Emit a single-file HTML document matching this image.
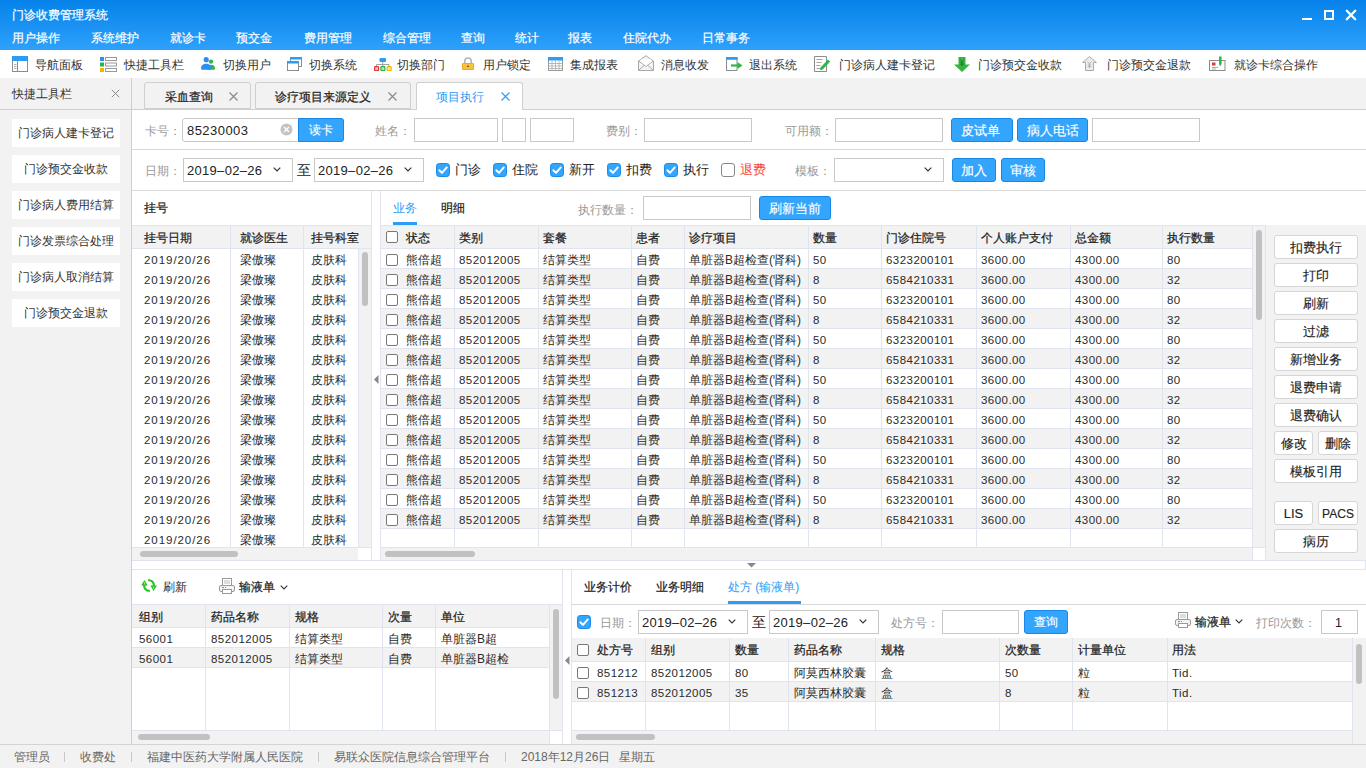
<!DOCTYPE html><html><head><meta charset="utf-8"><title>门诊收费管理系统</title><style>
*{box-sizing:border-box;margin:0;padding:0}
html,body{width:1366px;height:768px;overflow:hidden;background:#f2f2f2;font-family:"Liberation Sans",sans-serif;font-size:12px;color:#333}
.abs{position:absolute}
.t{position:absolute;white-space:nowrap;line-height:14px}
#hdr{position:absolute;left:0;top:0;width:1366px;height:50px;background:linear-gradient(#0582e9,#2ea1fc)}
#hdr .t{color:#fff}
#tb{position:absolute;left:0;top:50px;width:1366px;height:28px;background:#fff}
.ico{position:absolute}
.btnb{position:absolute;background:#34a5fd;border:1px solid #1688e8;color:#fff;border-radius:3px;text-align:center;line-height:22px;height:23px;-webkit-text-stroke:0.15px #fff}
.inp{position:absolute;background:#fff;border:1px solid #c9c9c9;height:24px}
.lbl{position:absolute;color:#999;white-space:nowrap;line-height:14px}
.cb{position:absolute;width:14px;height:14px;border-radius:3px;background:#2d9cf5}
.cbo{position:absolute;width:12px;height:12px;border-radius:2px;border:1px solid #777;background:#fff}
.gl{position:absolute;background:#dfe4ef}
.b{-webkit-text-stroke:0.22px #222}
.num{letter-spacing:0.2px}
.rbtn{position:absolute;background:#fff;border:1px solid #d6d6d6;border-radius:3px;text-align:center;line-height:23px;height:24px;color:#222;-webkit-text-stroke:0.15px #222}
</style></head><body>
<div id="hdr">
<div class="t" style="left:12px;top:8px;-webkit-text-stroke:0.2px #fff">门诊收费管理系统</div>
<div class="t" style="left:12px;top:31px;-webkit-text-stroke:0.2px #fff">用户操作</div>
<div class="t" style="left:91px;top:31px;-webkit-text-stroke:0.2px #fff">系统维护</div>
<div class="t" style="left:170px;top:31px;-webkit-text-stroke:0.2px #fff">就诊卡</div>
<div class="t" style="left:236px;top:31px;-webkit-text-stroke:0.2px #fff">预交金</div>
<div class="t" style="left:304px;top:31px;-webkit-text-stroke:0.2px #fff">费用管理</div>
<div class="t" style="left:383px;top:31px;-webkit-text-stroke:0.2px #fff">综合管理</div>
<div class="t" style="left:461px;top:31px;-webkit-text-stroke:0.2px #fff">查询</div>
<div class="t" style="left:515px;top:31px;-webkit-text-stroke:0.2px #fff">统计</div>
<div class="t" style="left:568px;top:31px;-webkit-text-stroke:0.2px #fff">报表</div>
<div class="t" style="left:623px;top:31px;-webkit-text-stroke:0.2px #fff">住院代办</div>
<div class="t" style="left:702px;top:31px;-webkit-text-stroke:0.2px #fff">日常事务</div>
<div class="abs" style="left:1302px;top:18px;width:10px;height:2px;background:#fff"></div>
<div class="abs" style="left:1324px;top:10px;width:10px;height:10px;border:2px solid #fff"></div>
<svg class="abs" style="left:1345px;top:9px" width="12" height="12" viewBox="0 0 12 12"><path d="M1.8 1.8L10.2 10.2M10.2 1.8L1.8 10.2" stroke="#fff" stroke-width="2.3" stroke-linecap="round"/></svg>
</div>
<div id="tb">
<div class="ico" style="left:12px;top:6px;line-height:0"><svg width="16" height="16" viewBox="0 0 16 16"><rect x="0.5" y="0.5" width="15" height="15" fill="#fff" stroke="#8c8c8c"/><rect x="0" y="0" width="16" height="5" fill="#2d9cf5"/><line x1="5.5" y1="5" x2="5.5" y2="16" stroke="#8c8c8c"/><path d="M2 8.5h2.5M2 10.5h2.5M2 12.5h2.5" stroke="#999" stroke-width="0.8"/></svg></div>
<div class="t" style="left:35px;top:8px;color:#333">导航面板</div>
<div class="ico" style="left:100px;top:7px;line-height:0"><svg width="17" height="15" viewBox="0 0 17 15"><rect x="0" y="0" width="4" height="4" fill="#2d8ef0"/><rect x="0" y="5.5" width="4" height="4" fill="#23b34a"/><rect x="0" y="11" width="4" height="4" fill="#f4b400"/><rect x="5.5" y="0.5" width="11" height="3" fill="none" stroke="#999"/><rect x="5.5" y="6" width="11" height="3" fill="none" stroke="#999"/><rect x="5.5" y="11.5" width="11" height="3" fill="none" stroke="#999"/></svg></div>
<div class="t" style="left:124px;top:8px;color:#333">快捷工具栏</div>
<div class="ico" style="left:201px;top:7px;line-height:0"><svg width="14" height="13" viewBox="0 0 14 13"><circle cx="10" cy="4.6" r="2.2" fill="#2fb84a"/><path d="M6.5 12.5C6.5 9.5 8 7.8 10.3 7.8S14 9.5 14 11.3C14 12.3 13.5 12.8 12.5 12.8H7z" fill="#2fb84a"/><circle cx="5.2" cy="2.7" r="2.6" fill="#2d8ef0"/><path d="M0 11.2C0 8.5 2.2 6.8 5.2 6.8S10.4 8.5 10.4 11.2C10.4 12.3 9.8 12.8 8.8 12.8H1.6C0.6 12.8 0 12.3 0 11.2z" fill="#2d8ef0"/></svg></div>
<div class="t" style="left:223px;top:8px;color:#333">切换用户</div>
<div class="ico" style="left:287px;top:7px;line-height:0"><svg width="15" height="14" viewBox="0 0 15 14"><rect x="3.5" y="0.5" width="11" height="9" fill="#fff" stroke="#8c8c8c"/><rect x="3" y="0" width="12" height="2.5" fill="#2d9cf5"/><rect x="0.5" y="4.5" width="11" height="9" fill="#fff" stroke="#8c8c8c"/><rect x="0" y="4" width="12" height="2.5" fill="#2d9cf5"/></svg></div>
<div class="t" style="left:309px;top:8px;color:#333">切换系统</div>
<div class="ico" style="left:374px;top:8px;line-height:0"><svg width="18" height="13" viewBox="0 0 18 13"><rect x="5.5" y="0" width="6.5" height="4" rx="1" fill="#2d9cf5"/><path d="M8.75 4v2.5M2.5 8.5V6.5h12.5v2M8.75 6.5v2" stroke="#999" fill="none" stroke-width="0.9"/><rect x="0.6" y="8.6" width="4" height="4" rx="0.8" fill="#f8c0c0" stroke="#e53935" stroke-width="1.2"/><rect x="6.9" y="8.6" width="4" height="4" rx="0.8" fill="#b8e8c0" stroke="#23b34a" stroke-width="1.2"/><rect x="13.2" y="8.6" width="4" height="4" rx="0.8" fill="#fde7a0" stroke="#f4b400" stroke-width="1.2"/></svg></div>
<div class="t" style="left:397px;top:8px;color:#333">切换部门</div>
<div class="ico" style="left:462px;top:7px;line-height:0"><svg width="12" height="13" viewBox="0 0 12 13"><path d="M2.8 6.5V4.2a3.2 3.2 0 0 1 6.4 0V6.5" fill="none" stroke="#b5b5b5" stroke-width="1.6"/><rect x="0" y="6" width="12" height="7" rx="1" fill="#f9c23c"/><rect x="0.5" y="6.5" width="11" height="6" rx="0.8" fill="none" stroke="#e0a820" stroke-width="0.8"/><rect x="5.2" y="8.6" width="1.6" height="1.4" fill="#5a4a10"/></svg></div>
<div class="t" style="left:483px;top:8px;color:#333">用户锁定</div>
<div class="ico" style="left:548px;top:7px;line-height:0"><svg width="15" height="14" viewBox="0 0 15 14"><rect x="0.5" y="0.5" width="14" height="13" fill="#fff" stroke="#999"/><rect x="0" y="0" width="15" height="3.5" fill="#2d9cf5"/><path d="M0.5 6.5h14M0.5 9h14M0.5 11.5h14M4 3.5v10M7.5 3.5v10M11 3.5v10" stroke="#aaa" stroke-width="0.8"/></svg></div>
<div class="t" style="left:570px;top:8px;color:#333">集成报表</div>
<div class="ico" style="left:638px;top:5px;line-height:0"><svg width="16" height="16" viewBox="0 0 16 16"><path d="M0.5 6L8 0.7L15.5 6v9.5H0.5z" fill="#f4f4f4" stroke="#aaa"/><path d="M2.5 4.5h11v5l-5.5 3-5.5-3z" fill="#fff" stroke="none"/><path d="M0.5 6l7.5 5.5L15.5 6M0.5 15.5l5.5-5M15.5 15.5l-5.5-5" fill="none" stroke="#aaa"/></svg></div>
<div class="t" style="left:661px;top:8px;color:#333">消息收发</div>
<div class="ico" style="left:726px;top:7px;line-height:0"><svg width="17" height="14" viewBox="0 0 17 14"><rect x="0.5" y="0.5" width="10.5" height="13" fill="#fff" stroke="#8c8c8c"/><rect x="0" y="0" width="11.5" height="2.8" fill="#2d9cf5"/><path d="M5 8.5h7" stroke="#2fb84a" stroke-width="2.2"/><path d="M11.5 5l5 3.5-5 3.5z" fill="#2fb84a"/></svg></div>
<div class="t" style="left:749px;top:8px;color:#333">退出系统</div>
<div class="ico" style="left:814px;top:6px;line-height:0"><svg width="17" height="16" viewBox="0 0 17 16"><path d="M0.5 0.5h12v15h-12z" fill="#fff" stroke="#8c8c8c"/><path d="M2.5 3.5h6M2.5 6.5h5M2.5 9.5h4M2.5 12.5h5" stroke="#999" stroke-width="0.9"/><path d="M6.5 11.5L14 3.5l2.2 2L8.7 13.5 6 14.3z" fill="#2fb84a"/></svg></div>
<div class="t" style="left:839px;top:8px;color:#333">门诊病人建卡登记</div>
<div class="ico" style="left:954px;top:7px;line-height:0"><svg width="16" height="15" viewBox="0 0 16 15"><path d="M4.5 0h7v7.5H16L8 15 0 7.5h4.5z" fill="#33b53f"/><path d="M6 2.5l2 2.5 2-2.5M8 5v4M6.3 6h3.4M6.3 7.6h3.4" stroke="#1a7a22" stroke-width="0.8" fill="none"/></svg></div>
<div class="t" style="left:978px;top:8px;color:#333">门诊预交金收款</div>
<div class="ico" style="left:1082px;top:6px;line-height:0"><svg width="15" height="15" viewBox="0 0 15 15"><path d="M7.5 0.6L14.4 6.5h-2.9v8h-8v-8H0.6z" fill="#ececec" stroke="#aaa"/><path d="M5.5 5.5l2 2.5 2-2.5M7.5 8v4M5.8 9h3.4M5.8 10.6h3.4" stroke="#aaa" stroke-width="0.8" fill="none"/></svg></div>
<div class="t" style="left:1107px;top:8px;color:#333">门诊预交金退款</div>
<div class="ico" style="left:1209px;top:6px;line-height:0"><svg width="17" height="15" viewBox="0 0 17 15"><rect x="0.5" y="4.5" width="15.5" height="10" fill="#fff" stroke="#8c8c8c"/><rect x="3" y="6.5" width="3.5" height="3" fill="#e53935"/><path d="M3 11.5h6M3 13h4" stroke="#999" stroke-width="0.8"/><path d="M10 0.5h2.6v7.5l-1.3 2.2-1.3-2.2z" fill="#2fb84a"/></svg></div>
<div class="t" style="left:1234px;top:8px;color:#333">就诊卡综合操作</div>
</div>
<div class="abs" style="left:0;top:78px;width:132px;height:667px;background:#f2f2f2;border-right:1px solid #cfcfcf"></div>
<div class="abs" style="left:0;top:109px;width:131px;height:1px;background:#cfcfcf"></div>
<div class="t" style="left:12px;top:87px;color:#333">快捷工具栏</div>
<svg class="abs" style="left:111px;top:89px" width="9" height="9" viewBox="0 0 9 9"><path d="M0.8 0.8L8.2 8.2M8.2 0.8L0.8 8.2" stroke="#888" stroke-width="1"/></svg>
<div class="abs" style="left:12px;top:119px;width:108px;height:28px;background:#fff;text-align:center;line-height:28px">门诊病人建卡登记</div>
<div class="abs" style="left:12px;top:155px;width:108px;height:28px;background:#fff;text-align:center;line-height:28px">门诊预交金收款</div>
<div class="abs" style="left:12px;top:191px;width:108px;height:28px;background:#fff;text-align:center;line-height:28px">门诊病人费用结算</div>
<div class="abs" style="left:12px;top:227px;width:108px;height:28px;background:#fff;text-align:center;line-height:28px">门诊发票综合处理</div>
<div class="abs" style="left:12px;top:263px;width:108px;height:28px;background:#fff;text-align:center;line-height:28px">门诊病人取消结算</div>
<div class="abs" style="left:12px;top:299px;width:108px;height:28px;background:#fff;text-align:center;line-height:28px">门诊预交金退款</div>
<div class="abs" style="left:132px;top:109px;width:1234px;height:1px;background:#cfcfcf"></div>
<div class="abs" style="left:144px;top:82px;width:107px;height:27px;background:#f2f2f2;border:1px solid #cfcfcf;;border-radius:3px 3px 0 0"></div>
<div class="abs" style="left:255px;top:82px;width:156px;height:27px;background:#f2f2f2;border:1px solid #cfcfcf;;border-radius:3px 3px 0 0"></div>
<div class="abs" style="left:416px;top:82px;width:107px;border-bottom:none;height:28px;background:#fff;border:1px solid #cfcfcf;border-bottom:none;border-radius:3px 3px 0 0"></div>
<div class="t" style="left:165px;top:90px;color:#222;-webkit-text-stroke:0.22px #222">采血查询</div>
<div class="t" style="left:275px;top:90px;color:#222;-webkit-text-stroke:0.22px #222">诊疗项目来源定义</div>
<div class="t" style="left:436px;top:90px;color:#2d9cf5">项目执行</div>
<svg class="abs" style="left:229px;top:92px" width="9" height="9" viewBox="0 0 9 9"><path d="M0.5 0.5L8.5 8.5M8.5 0.5L0.5 8.5" stroke="#888" stroke-width="1.1"/></svg>
<svg class="abs" style="left:388px;top:92px" width="9" height="9" viewBox="0 0 9 9"><path d="M0.5 0.5L8.5 8.5M8.5 0.5L0.5 8.5" stroke="#888" stroke-width="1.1"/></svg>
<svg class="abs" style="left:501px;top:92px" width="9" height="9" viewBox="0 0 9 9"><path d="M0.5 0.5L8.5 8.5M8.5 0.5L0.5 8.5" stroke="#2d9cf5" stroke-width="1.1"/></svg>
<div class="abs" style="left:132px;top:110px;width:1234px;height:80px;background:#fff"></div>
<div class="abs" style="left:132px;top:149px;width:1234px;height:1px;background:#d9d9d9"></div>
<div class="abs" style="left:132px;top:190px;width:1234px;height:1px;background:#d9d9d9"></div>
<div class="lbl" style="left:145px;top:124px">卡号：</div>
<div class="inp" style="left:182px;top:118px;width:162px;height:24px;border-radius:3px"></div>
<div class="t" style="left:187px;top:124px;font-size:13px;line-height:14px;letter-spacing:0.45px;color:#222">85230003</div>
<svg class="abs" style="left:280px;top:123px" width="13" height="13" viewBox="0 0 13 13"><circle cx="6.5" cy="6.5" r="6" fill="#c3c3c3"/><path d="M4 4L9 9M9 4L4 9" stroke="#fff" stroke-width="1.3"/></svg>
<div class="btnb" style="left:298px;top:118px;width:46px;height:24px;line-height:23px;border-radius:0 3px 3px 0">读卡</div>
<div class="lbl" style="left:375px;top:124px">姓名：</div>
<div class="inp" style="left:414px;top:118px;width:84px;height:24px;"></div>
<div class="inp" style="left:502px;top:118px;width:24px;height:24px;"></div>
<div class="inp" style="left:530px;top:118px;width:44px;height:24px;"></div>
<div class="lbl" style="left:606px;top:124px">费别：</div>
<div class="inp" style="left:644px;top:118px;width:108px;height:24px;"></div>
<div class="lbl" style="left:785px;top:124px">可用额：</div>
<div class="inp" style="left:835px;top:118px;width:108px;height:24px;"></div>
<div class="btnb" style="left:951px;top:118px;width:62px;height:24px;line-height:23px;font-size:13px"><span style="margin-left:-3px">皮试单</span></div>
<div class="btnb" style="left:1017px;top:118px;width:71px;height:24px;line-height:23px;font-size:13px">病人电话</div>
<div class="inp" style="left:1092px;top:118px;width:108px;height:24px;"></div>
<div class="lbl" style="left:145px;top:164px">日期：</div>
<div class="inp" style="left:183px;top:158px;width:110px;height:24px"></div>
<div class="t" style="left:187px;top:164px;font-size:13px;letter-spacing:0.3px;color:#222">2019–02–26</div>
<svg class="abs" style="left:273px;top:167px" width="8" height="5" viewBox="0 0 8 5"><path d="M0.7 0.7L4 4L7.3 0.7" fill="none" stroke="#333" stroke-width="1.2"/></svg>
<div class="t" style="left:297px;top:163px;font-size:14px;color:#222">至</div>
<div class="inp" style="left:314px;top:158px;width:110px;height:24px"></div>
<div class="t" style="left:318px;top:164px;font-size:13px;letter-spacing:0.3px;color:#222">2019–02–26</div>
<svg class="abs" style="left:404px;top:167px" width="8" height="5" viewBox="0 0 8 5"><path d="M0.7 0.7L4 4L7.3 0.7" fill="none" stroke="#333" stroke-width="1.2"/></svg>
<svg class="abs" style="left:436px;top:163px" width="14" height="14" viewBox="0 0 14 14"><rect x="0.5" y="0.5" width="13" height="13" rx="2.8" fill="#34a5fd" stroke="#1a8be9"/><path d="M3.3 7.3L6 9.9L10.8 4.4" fill="none" stroke="#fff" stroke-width="1.9" stroke-linecap="round" stroke-linejoin="round"/></svg>
<div class="t" style="left:455px;top:163px;font-size:13px;color:#222">门诊</div>
<svg class="abs" style="left:493px;top:163px" width="14" height="14" viewBox="0 0 14 14"><rect x="0.5" y="0.5" width="13" height="13" rx="2.8" fill="#34a5fd" stroke="#1a8be9"/><path d="M3.3 7.3L6 9.9L10.8 4.4" fill="none" stroke="#fff" stroke-width="1.9" stroke-linecap="round" stroke-linejoin="round"/></svg>
<div class="t" style="left:512px;top:163px;font-size:13px;color:#222">住院</div>
<svg class="abs" style="left:550px;top:163px" width="14" height="14" viewBox="0 0 14 14"><rect x="0.5" y="0.5" width="13" height="13" rx="2.8" fill="#34a5fd" stroke="#1a8be9"/><path d="M3.3 7.3L6 9.9L10.8 4.4" fill="none" stroke="#fff" stroke-width="1.9" stroke-linecap="round" stroke-linejoin="round"/></svg>
<div class="t" style="left:569px;top:163px;font-size:13px;color:#222">新开</div>
<svg class="abs" style="left:607px;top:163px" width="14" height="14" viewBox="0 0 14 14"><rect x="0.5" y="0.5" width="13" height="13" rx="2.8" fill="#34a5fd" stroke="#1a8be9"/><path d="M3.3 7.3L6 9.9L10.8 4.4" fill="none" stroke="#fff" stroke-width="1.9" stroke-linecap="round" stroke-linejoin="round"/></svg>
<div class="t" style="left:626px;top:163px;font-size:13px;color:#222">扣费</div>
<svg class="abs" style="left:664px;top:163px" width="14" height="14" viewBox="0 0 14 14"><rect x="0.5" y="0.5" width="13" height="13" rx="2.8" fill="#34a5fd" stroke="#1a8be9"/><path d="M3.3 7.3L6 9.9L10.8 4.4" fill="none" stroke="#fff" stroke-width="1.9" stroke-linecap="round" stroke-linejoin="round"/></svg>
<div class="t" style="left:683px;top:163px;font-size:13px;color:#222">执行</div>
<div class="abs" style="left:721px;top:163px;width:14px;height:14px;border:1px solid #888;border-radius:3px;background:#fff"></div>
<div class="t" style="left:740px;top:163px;font-size:13px;color:#f5423b">退费</div>
<div class="lbl" style="left:795px;top:164px">模板：</div>
<div class="inp" style="left:834px;top:158px;width:110px;height:24px"></div>
<svg class="abs" style="left:924px;top:167px" width="8" height="5" viewBox="0 0 8 5"><path d="M0.7 0.7L4 4L7.3 0.7" fill="none" stroke="#333" stroke-width="1.2"/></svg>
<div class="btnb" style="left:952px;top:158px;width:44px;height:24px;line-height:23px;font-size:13px">加入</div>
<div class="btnb" style="left:1001px;top:158px;width:44px;height:24px;line-height:23px;font-size:13px">审核</div>
<div class="abs" style="left:132px;top:191px;width:240px;height:369px;background:#fff"></div>
<div class="t" style="left:144px;top:201px;color:#222;-webkit-text-stroke:0.22px #222">挂号</div>
<div class="abs" style="left:132px;top:226px;width:239px;height:22px;background:#f2f2f2"></div>
<div class="abs" style="left:132px;top:225px;width:239px;height:1px;background:#dfe4ef"></div>
<div class="abs" style="left:132px;top:248px;width:239px;height:1px;background:#dfe4ef"></div>
<div class="abs" style="left:230px;top:225px;width:1px;height:323px;background:#dfe4ef"></div>
<div class="abs" style="left:303px;top:225px;width:1px;height:323px;background:#dfe4ef"></div>
<div class="t" style="left:144px;top:231px;color:#222;-webkit-text-stroke:0.22px #222">挂号日期</div>
<div class="t" style="left:240px;top:231px;color:#222;-webkit-text-stroke:0.22px #222">就诊医生</div>
<div class="t" style="left:311px;top:231px;color:#222;-webkit-text-stroke:0.22px #222">挂号科室</div>
<div class="t" style="left:144px;top:253px;font-size:11.5px;letter-spacing:0.95px;color:#2a2a2a">2019/20/26</div>
<div class="t" style="left:240px;top:253px;color:#2a2a2a">梁傲璨</div>
<div class="t" style="left:311px;top:253px;color:#2a2a2a">皮肤科</div>
<div class="t" style="left:144px;top:273px;font-size:11.5px;letter-spacing:0.95px;color:#2a2a2a">2019/20/26</div>
<div class="t" style="left:240px;top:273px;color:#2a2a2a">梁傲璨</div>
<div class="t" style="left:311px;top:273px;color:#2a2a2a">皮肤科</div>
<div class="t" style="left:144px;top:293px;font-size:11.5px;letter-spacing:0.95px;color:#2a2a2a">2019/20/26</div>
<div class="t" style="left:240px;top:293px;color:#2a2a2a">梁傲璨</div>
<div class="t" style="left:311px;top:293px;color:#2a2a2a">皮肤科</div>
<div class="t" style="left:144px;top:313px;font-size:11.5px;letter-spacing:0.95px;color:#2a2a2a">2019/20/26</div>
<div class="t" style="left:240px;top:313px;color:#2a2a2a">梁傲璨</div>
<div class="t" style="left:311px;top:313px;color:#2a2a2a">皮肤科</div>
<div class="t" style="left:144px;top:333px;font-size:11.5px;letter-spacing:0.95px;color:#2a2a2a">2019/20/26</div>
<div class="t" style="left:240px;top:333px;color:#2a2a2a">梁傲璨</div>
<div class="t" style="left:311px;top:333px;color:#2a2a2a">皮肤科</div>
<div class="t" style="left:144px;top:353px;font-size:11.5px;letter-spacing:0.95px;color:#2a2a2a">2019/20/26</div>
<div class="t" style="left:240px;top:353px;color:#2a2a2a">梁傲璨</div>
<div class="t" style="left:311px;top:353px;color:#2a2a2a">皮肤科</div>
<div class="t" style="left:144px;top:373px;font-size:11.5px;letter-spacing:0.95px;color:#2a2a2a">2019/20/26</div>
<div class="t" style="left:240px;top:373px;color:#2a2a2a">梁傲璨</div>
<div class="t" style="left:311px;top:373px;color:#2a2a2a">皮肤科</div>
<div class="t" style="left:144px;top:393px;font-size:11.5px;letter-spacing:0.95px;color:#2a2a2a">2019/20/26</div>
<div class="t" style="left:240px;top:393px;color:#2a2a2a">梁傲璨</div>
<div class="t" style="left:311px;top:393px;color:#2a2a2a">皮肤科</div>
<div class="t" style="left:144px;top:413px;font-size:11.5px;letter-spacing:0.95px;color:#2a2a2a">2019/20/26</div>
<div class="t" style="left:240px;top:413px;color:#2a2a2a">梁傲璨</div>
<div class="t" style="left:311px;top:413px;color:#2a2a2a">皮肤科</div>
<div class="t" style="left:144px;top:433px;font-size:11.5px;letter-spacing:0.95px;color:#2a2a2a">2019/20/26</div>
<div class="t" style="left:240px;top:433px;color:#2a2a2a">梁傲璨</div>
<div class="t" style="left:311px;top:433px;color:#2a2a2a">皮肤科</div>
<div class="t" style="left:144px;top:453px;font-size:11.5px;letter-spacing:0.95px;color:#2a2a2a">2019/20/26</div>
<div class="t" style="left:240px;top:453px;color:#2a2a2a">梁傲璨</div>
<div class="t" style="left:311px;top:453px;color:#2a2a2a">皮肤科</div>
<div class="t" style="left:144px;top:473px;font-size:11.5px;letter-spacing:0.95px;color:#2a2a2a">2019/20/26</div>
<div class="t" style="left:240px;top:473px;color:#2a2a2a">梁傲璨</div>
<div class="t" style="left:311px;top:473px;color:#2a2a2a">皮肤科</div>
<div class="t" style="left:144px;top:493px;font-size:11.5px;letter-spacing:0.95px;color:#2a2a2a">2019/20/26</div>
<div class="t" style="left:240px;top:493px;color:#2a2a2a">梁傲璨</div>
<div class="t" style="left:311px;top:493px;color:#2a2a2a">皮肤科</div>
<div class="t" style="left:144px;top:513px;font-size:11.5px;letter-spacing:0.95px;color:#2a2a2a">2019/20/26</div>
<div class="t" style="left:240px;top:513px;color:#2a2a2a">梁傲璨</div>
<div class="t" style="left:311px;top:513px;color:#2a2a2a">皮肤科</div>
<div class="t" style="left:144px;top:533px;font-size:11.5px;letter-spacing:0.95px;color:#2a2a2a">2019/20/26</div>
<div class="t" style="left:240px;top:533px;color:#2a2a2a">梁傲璨</div>
<div class="t" style="left:311px;top:533px;color:#2a2a2a">皮肤科</div>
<div class="abs" style="left:358px;top:249px;width:13px;height:299px;background:#f2f2f2"></div>
<div class="abs" style="left:358px;top:248px;width:1px;height:300px;background:#dfe4ef"></div>
<div class="abs" style="left:362px;top:252px;width:6px;height:54px;border-radius:3px;background:#c1c1c1"></div>
<div class="abs" style="left:132px;top:548px;width:226px;height:12px;background:#f2f2f2"></div>
<div class="abs" style="left:132px;top:547px;width:239px;height:1px;background:#dfe4ef"></div>
<div class="abs" style="left:140px;top:551px;width:98px;height:6px;border-radius:3px;background:#c1c1c1"></div>
<div class="abs" style="left:371px;top:191px;width:1px;height:369px;background:#dfe4ef"></div>
<div class="abs" style="left:372px;top:191px;width:8px;height:369px;background:#fff"></div>
<svg class="abs" style="left:374px;top:375px" width="5" height="9" viewBox="0 0 5 9"><path d="M4.5 0L0 4.5L4.5 9z" fill="#888"/></svg>
<div class="abs" style="left:380px;top:191px;width:886px;height:369px;background:#fff"></div>
<div class="abs" style="left:380px;top:191px;width:1px;height:369px;background:#dfe4ef"></div>
<div class="t" style="left:393px;top:201px;color:#2d9cf5">业务</div>
<div class="t" style="left:441px;top:201px;color:#222;-webkit-text-stroke:0.22px #222">明细</div>
<div class="abs" style="left:393px;top:222px;width:24px;height:3px;background:#2d9cf5"></div>
<div class="lbl" style="left:578px;top:203px">执行数量：</div>
<div class="inp" style="left:643px;top:196px;width:108px;height:24px;"></div>
<div class="btnb" style="left:759px;top:196px;width:72px;height:24px;line-height:23px;font-size:13px">刷新当前</div>
<div class="abs" style="left:381px;top:226px;width:871px;height:22px;background:#f2f2f2"></div>
<div class="abs" style="left:381px;top:225px;width:885px;height:1px;background:#dfe4ef"></div>
<div class="abs" style="left:381px;top:248px;width:871px;height:1px;background:#dfe4ef"></div>
<div class="abs" style="left:381px;top:269px;width:871px;height:19px;background:#f2f2f2"></div>
<div class="abs" style="left:381px;top:268px;width:871px;height:1px;background:#dfe4ef"></div>
<div class="abs" style="left:381px;top:288px;width:871px;height:1px;background:#dfe4ef"></div>
<div class="abs" style="left:381px;top:309px;width:871px;height:19px;background:#f2f2f2"></div>
<div class="abs" style="left:381px;top:308px;width:871px;height:1px;background:#dfe4ef"></div>
<div class="abs" style="left:381px;top:328px;width:871px;height:1px;background:#dfe4ef"></div>
<div class="abs" style="left:381px;top:349px;width:871px;height:19px;background:#f2f2f2"></div>
<div class="abs" style="left:381px;top:348px;width:871px;height:1px;background:#dfe4ef"></div>
<div class="abs" style="left:381px;top:368px;width:871px;height:1px;background:#dfe4ef"></div>
<div class="abs" style="left:381px;top:389px;width:871px;height:19px;background:#f2f2f2"></div>
<div class="abs" style="left:381px;top:388px;width:871px;height:1px;background:#dfe4ef"></div>
<div class="abs" style="left:381px;top:408px;width:871px;height:1px;background:#dfe4ef"></div>
<div class="abs" style="left:381px;top:429px;width:871px;height:19px;background:#f2f2f2"></div>
<div class="abs" style="left:381px;top:428px;width:871px;height:1px;background:#dfe4ef"></div>
<div class="abs" style="left:381px;top:448px;width:871px;height:1px;background:#dfe4ef"></div>
<div class="abs" style="left:381px;top:469px;width:871px;height:19px;background:#f2f2f2"></div>
<div class="abs" style="left:381px;top:468px;width:871px;height:1px;background:#dfe4ef"></div>
<div class="abs" style="left:381px;top:488px;width:871px;height:1px;background:#dfe4ef"></div>
<div class="abs" style="left:381px;top:509px;width:871px;height:19px;background:#f2f2f2"></div>
<div class="abs" style="left:381px;top:508px;width:871px;height:1px;background:#dfe4ef"></div>
<div class="abs" style="left:381px;top:528px;width:871px;height:1px;background:#dfe4ef"></div>
<div class="abs" style="left:381px;top:547px;width:871px;height:1px;background:#dfe4ef"></div>
<div class="abs" style="left:454px;top:225px;width:1px;height:323px;background:#dfe4ef"></div>
<div class="abs" style="left:538px;top:225px;width:1px;height:323px;background:#dfe4ef"></div>
<div class="abs" style="left:631px;top:225px;width:1px;height:323px;background:#dfe4ef"></div>
<div class="abs" style="left:684px;top:225px;width:1px;height:323px;background:#dfe4ef"></div>
<div class="abs" style="left:808px;top:225px;width:1px;height:323px;background:#dfe4ef"></div>
<div class="abs" style="left:881px;top:225px;width:1px;height:323px;background:#dfe4ef"></div>
<div class="abs" style="left:976px;top:225px;width:1px;height:323px;background:#dfe4ef"></div>
<div class="abs" style="left:1070px;top:225px;width:1px;height:323px;background:#dfe4ef"></div>
<div class="abs" style="left:1162px;top:225px;width:1px;height:323px;background:#dfe4ef"></div>
<div class="t" style="left:406px;top:231px;color:#222;-webkit-text-stroke:0.22px #222">状态</div>
<div class="t" style="left:459px;top:231px;color:#222;-webkit-text-stroke:0.22px #222">类别</div>
<div class="t" style="left:543px;top:231px;color:#222;-webkit-text-stroke:0.22px #222">套餐</div>
<div class="t" style="left:636px;top:231px;color:#222;-webkit-text-stroke:0.22px #222">患者</div>
<div class="t" style="left:689px;top:231px;color:#222;-webkit-text-stroke:0.22px #222">诊疗项目</div>
<div class="t" style="left:813px;top:231px;color:#222;-webkit-text-stroke:0.22px #222">数量</div>
<div class="t" style="left:886px;top:231px;color:#222;-webkit-text-stroke:0.22px #222">门诊住院号</div>
<div class="t" style="left:981px;top:231px;color:#222;-webkit-text-stroke:0.22px #222">个人账户支付</div>
<div class="t" style="left:1075px;top:231px;color:#222;-webkit-text-stroke:0.22px #222">总金额</div>
<div class="t" style="left:1167px;top:231px;color:#222;-webkit-text-stroke:0.22px #222">执行数量</div>
<div class="cbo" style="left:386px;top:231px"></div>
<div class="cbo" style="left:386px;top:254px"></div>
<div class="t" style="left:406px;top:253px;color:#2a2a2a">熊倍超</div>
<div class="t" style="left:459px;top:253px;font-size:11.5px;letter-spacing:0.45px;color:#2a2a2a">852012005</div>
<div class="t" style="left:543px;top:253px;color:#2a2a2a">结算类型</div>
<div class="t" style="left:636px;top:253px;color:#2a2a2a">自费</div>
<div class="t" style="left:689px;top:253px;color:#2a2a2a">单脏器B超检查(肾科)</div>
<div class="t" style="left:813px;top:253px;font-size:11.5px;letter-spacing:0.45px;color:#2a2a2a">50</div>
<div class="t" style="left:886px;top:253px;font-size:11.5px;letter-spacing:0.45px;color:#2a2a2a">6323200101</div>
<div class="t" style="left:981px;top:253px;font-size:11.5px;letter-spacing:0.45px;color:#2a2a2a">3600.00</div>
<div class="t" style="left:1075px;top:253px;font-size:11.5px;letter-spacing:0.45px;color:#2a2a2a">4300.00</div>
<div class="t" style="left:1167px;top:253px;font-size:11.5px;letter-spacing:0.45px;color:#2a2a2a">80</div>
<div class="cbo" style="left:386px;top:274px"></div>
<div class="t" style="left:406px;top:273px;color:#2a2a2a">熊倍超</div>
<div class="t" style="left:459px;top:273px;font-size:11.5px;letter-spacing:0.45px;color:#2a2a2a">852012005</div>
<div class="t" style="left:543px;top:273px;color:#2a2a2a">结算类型</div>
<div class="t" style="left:636px;top:273px;color:#2a2a2a">自费</div>
<div class="t" style="left:689px;top:273px;color:#2a2a2a">单脏器B超检查(肾科)</div>
<div class="t" style="left:813px;top:273px;font-size:11.5px;letter-spacing:0.45px;color:#2a2a2a">8</div>
<div class="t" style="left:886px;top:273px;font-size:11.5px;letter-spacing:0.45px;color:#2a2a2a">6584210331</div>
<div class="t" style="left:981px;top:273px;font-size:11.5px;letter-spacing:0.45px;color:#2a2a2a">3600.00</div>
<div class="t" style="left:1075px;top:273px;font-size:11.5px;letter-spacing:0.45px;color:#2a2a2a">4300.00</div>
<div class="t" style="left:1167px;top:273px;font-size:11.5px;letter-spacing:0.45px;color:#2a2a2a">32</div>
<div class="cbo" style="left:386px;top:294px"></div>
<div class="t" style="left:406px;top:293px;color:#2a2a2a">熊倍超</div>
<div class="t" style="left:459px;top:293px;font-size:11.5px;letter-spacing:0.45px;color:#2a2a2a">852012005</div>
<div class="t" style="left:543px;top:293px;color:#2a2a2a">结算类型</div>
<div class="t" style="left:636px;top:293px;color:#2a2a2a">自费</div>
<div class="t" style="left:689px;top:293px;color:#2a2a2a">单脏器B超检查(肾科)</div>
<div class="t" style="left:813px;top:293px;font-size:11.5px;letter-spacing:0.45px;color:#2a2a2a">50</div>
<div class="t" style="left:886px;top:293px;font-size:11.5px;letter-spacing:0.45px;color:#2a2a2a">6323200101</div>
<div class="t" style="left:981px;top:293px;font-size:11.5px;letter-spacing:0.45px;color:#2a2a2a">3600.00</div>
<div class="t" style="left:1075px;top:293px;font-size:11.5px;letter-spacing:0.45px;color:#2a2a2a">4300.00</div>
<div class="t" style="left:1167px;top:293px;font-size:11.5px;letter-spacing:0.45px;color:#2a2a2a">80</div>
<div class="cbo" style="left:386px;top:314px"></div>
<div class="t" style="left:406px;top:313px;color:#2a2a2a">熊倍超</div>
<div class="t" style="left:459px;top:313px;font-size:11.5px;letter-spacing:0.45px;color:#2a2a2a">852012005</div>
<div class="t" style="left:543px;top:313px;color:#2a2a2a">结算类型</div>
<div class="t" style="left:636px;top:313px;color:#2a2a2a">自费</div>
<div class="t" style="left:689px;top:313px;color:#2a2a2a">单脏器B超检查(肾科)</div>
<div class="t" style="left:813px;top:313px;font-size:11.5px;letter-spacing:0.45px;color:#2a2a2a">8</div>
<div class="t" style="left:886px;top:313px;font-size:11.5px;letter-spacing:0.45px;color:#2a2a2a">6584210331</div>
<div class="t" style="left:981px;top:313px;font-size:11.5px;letter-spacing:0.45px;color:#2a2a2a">3600.00</div>
<div class="t" style="left:1075px;top:313px;font-size:11.5px;letter-spacing:0.45px;color:#2a2a2a">4300.00</div>
<div class="t" style="left:1167px;top:313px;font-size:11.5px;letter-spacing:0.45px;color:#2a2a2a">32</div>
<div class="cbo" style="left:386px;top:334px"></div>
<div class="t" style="left:406px;top:333px;color:#2a2a2a">熊倍超</div>
<div class="t" style="left:459px;top:333px;font-size:11.5px;letter-spacing:0.45px;color:#2a2a2a">852012005</div>
<div class="t" style="left:543px;top:333px;color:#2a2a2a">结算类型</div>
<div class="t" style="left:636px;top:333px;color:#2a2a2a">自费</div>
<div class="t" style="left:689px;top:333px;color:#2a2a2a">单脏器B超检查(肾科)</div>
<div class="t" style="left:813px;top:333px;font-size:11.5px;letter-spacing:0.45px;color:#2a2a2a">50</div>
<div class="t" style="left:886px;top:333px;font-size:11.5px;letter-spacing:0.45px;color:#2a2a2a">6323200101</div>
<div class="t" style="left:981px;top:333px;font-size:11.5px;letter-spacing:0.45px;color:#2a2a2a">3600.00</div>
<div class="t" style="left:1075px;top:333px;font-size:11.5px;letter-spacing:0.45px;color:#2a2a2a">4300.00</div>
<div class="t" style="left:1167px;top:333px;font-size:11.5px;letter-spacing:0.45px;color:#2a2a2a">80</div>
<div class="cbo" style="left:386px;top:354px"></div>
<div class="t" style="left:406px;top:353px;color:#2a2a2a">熊倍超</div>
<div class="t" style="left:459px;top:353px;font-size:11.5px;letter-spacing:0.45px;color:#2a2a2a">852012005</div>
<div class="t" style="left:543px;top:353px;color:#2a2a2a">结算类型</div>
<div class="t" style="left:636px;top:353px;color:#2a2a2a">自费</div>
<div class="t" style="left:689px;top:353px;color:#2a2a2a">单脏器B超检查(肾科)</div>
<div class="t" style="left:813px;top:353px;font-size:11.5px;letter-spacing:0.45px;color:#2a2a2a">8</div>
<div class="t" style="left:886px;top:353px;font-size:11.5px;letter-spacing:0.45px;color:#2a2a2a">6584210331</div>
<div class="t" style="left:981px;top:353px;font-size:11.5px;letter-spacing:0.45px;color:#2a2a2a">3600.00</div>
<div class="t" style="left:1075px;top:353px;font-size:11.5px;letter-spacing:0.45px;color:#2a2a2a">4300.00</div>
<div class="t" style="left:1167px;top:353px;font-size:11.5px;letter-spacing:0.45px;color:#2a2a2a">32</div>
<div class="cbo" style="left:386px;top:374px"></div>
<div class="t" style="left:406px;top:373px;color:#2a2a2a">熊倍超</div>
<div class="t" style="left:459px;top:373px;font-size:11.5px;letter-spacing:0.45px;color:#2a2a2a">852012005</div>
<div class="t" style="left:543px;top:373px;color:#2a2a2a">结算类型</div>
<div class="t" style="left:636px;top:373px;color:#2a2a2a">自费</div>
<div class="t" style="left:689px;top:373px;color:#2a2a2a">单脏器B超检查(肾科)</div>
<div class="t" style="left:813px;top:373px;font-size:11.5px;letter-spacing:0.45px;color:#2a2a2a">50</div>
<div class="t" style="left:886px;top:373px;font-size:11.5px;letter-spacing:0.45px;color:#2a2a2a">6323200101</div>
<div class="t" style="left:981px;top:373px;font-size:11.5px;letter-spacing:0.45px;color:#2a2a2a">3600.00</div>
<div class="t" style="left:1075px;top:373px;font-size:11.5px;letter-spacing:0.45px;color:#2a2a2a">4300.00</div>
<div class="t" style="left:1167px;top:373px;font-size:11.5px;letter-spacing:0.45px;color:#2a2a2a">80</div>
<div class="cbo" style="left:386px;top:394px"></div>
<div class="t" style="left:406px;top:393px;color:#2a2a2a">熊倍超</div>
<div class="t" style="left:459px;top:393px;font-size:11.5px;letter-spacing:0.45px;color:#2a2a2a">852012005</div>
<div class="t" style="left:543px;top:393px;color:#2a2a2a">结算类型</div>
<div class="t" style="left:636px;top:393px;color:#2a2a2a">自费</div>
<div class="t" style="left:689px;top:393px;color:#2a2a2a">单脏器B超检查(肾科)</div>
<div class="t" style="left:813px;top:393px;font-size:11.5px;letter-spacing:0.45px;color:#2a2a2a">8</div>
<div class="t" style="left:886px;top:393px;font-size:11.5px;letter-spacing:0.45px;color:#2a2a2a">6584210331</div>
<div class="t" style="left:981px;top:393px;font-size:11.5px;letter-spacing:0.45px;color:#2a2a2a">3600.00</div>
<div class="t" style="left:1075px;top:393px;font-size:11.5px;letter-spacing:0.45px;color:#2a2a2a">4300.00</div>
<div class="t" style="left:1167px;top:393px;font-size:11.5px;letter-spacing:0.45px;color:#2a2a2a">32</div>
<div class="cbo" style="left:386px;top:414px"></div>
<div class="t" style="left:406px;top:413px;color:#2a2a2a">熊倍超</div>
<div class="t" style="left:459px;top:413px;font-size:11.5px;letter-spacing:0.45px;color:#2a2a2a">852012005</div>
<div class="t" style="left:543px;top:413px;color:#2a2a2a">结算类型</div>
<div class="t" style="left:636px;top:413px;color:#2a2a2a">自费</div>
<div class="t" style="left:689px;top:413px;color:#2a2a2a">单脏器B超检查(肾科)</div>
<div class="t" style="left:813px;top:413px;font-size:11.5px;letter-spacing:0.45px;color:#2a2a2a">50</div>
<div class="t" style="left:886px;top:413px;font-size:11.5px;letter-spacing:0.45px;color:#2a2a2a">6323200101</div>
<div class="t" style="left:981px;top:413px;font-size:11.5px;letter-spacing:0.45px;color:#2a2a2a">3600.00</div>
<div class="t" style="left:1075px;top:413px;font-size:11.5px;letter-spacing:0.45px;color:#2a2a2a">4300.00</div>
<div class="t" style="left:1167px;top:413px;font-size:11.5px;letter-spacing:0.45px;color:#2a2a2a">80</div>
<div class="cbo" style="left:386px;top:434px"></div>
<div class="t" style="left:406px;top:433px;color:#2a2a2a">熊倍超</div>
<div class="t" style="left:459px;top:433px;font-size:11.5px;letter-spacing:0.45px;color:#2a2a2a">852012005</div>
<div class="t" style="left:543px;top:433px;color:#2a2a2a">结算类型</div>
<div class="t" style="left:636px;top:433px;color:#2a2a2a">自费</div>
<div class="t" style="left:689px;top:433px;color:#2a2a2a">单脏器B超检查(肾科)</div>
<div class="t" style="left:813px;top:433px;font-size:11.5px;letter-spacing:0.45px;color:#2a2a2a">8</div>
<div class="t" style="left:886px;top:433px;font-size:11.5px;letter-spacing:0.45px;color:#2a2a2a">6584210331</div>
<div class="t" style="left:981px;top:433px;font-size:11.5px;letter-spacing:0.45px;color:#2a2a2a">3600.00</div>
<div class="t" style="left:1075px;top:433px;font-size:11.5px;letter-spacing:0.45px;color:#2a2a2a">4300.00</div>
<div class="t" style="left:1167px;top:433px;font-size:11.5px;letter-spacing:0.45px;color:#2a2a2a">32</div>
<div class="cbo" style="left:386px;top:454px"></div>
<div class="t" style="left:406px;top:453px;color:#2a2a2a">熊倍超</div>
<div class="t" style="left:459px;top:453px;font-size:11.5px;letter-spacing:0.45px;color:#2a2a2a">852012005</div>
<div class="t" style="left:543px;top:453px;color:#2a2a2a">结算类型</div>
<div class="t" style="left:636px;top:453px;color:#2a2a2a">自费</div>
<div class="t" style="left:689px;top:453px;color:#2a2a2a">单脏器B超检查(肾科)</div>
<div class="t" style="left:813px;top:453px;font-size:11.5px;letter-spacing:0.45px;color:#2a2a2a">50</div>
<div class="t" style="left:886px;top:453px;font-size:11.5px;letter-spacing:0.45px;color:#2a2a2a">6323200101</div>
<div class="t" style="left:981px;top:453px;font-size:11.5px;letter-spacing:0.45px;color:#2a2a2a">3600.00</div>
<div class="t" style="left:1075px;top:453px;font-size:11.5px;letter-spacing:0.45px;color:#2a2a2a">4300.00</div>
<div class="t" style="left:1167px;top:453px;font-size:11.5px;letter-spacing:0.45px;color:#2a2a2a">80</div>
<div class="cbo" style="left:386px;top:474px"></div>
<div class="t" style="left:406px;top:473px;color:#2a2a2a">熊倍超</div>
<div class="t" style="left:459px;top:473px;font-size:11.5px;letter-spacing:0.45px;color:#2a2a2a">852012005</div>
<div class="t" style="left:543px;top:473px;color:#2a2a2a">结算类型</div>
<div class="t" style="left:636px;top:473px;color:#2a2a2a">自费</div>
<div class="t" style="left:689px;top:473px;color:#2a2a2a">单脏器B超检查(肾科)</div>
<div class="t" style="left:813px;top:473px;font-size:11.5px;letter-spacing:0.45px;color:#2a2a2a">8</div>
<div class="t" style="left:886px;top:473px;font-size:11.5px;letter-spacing:0.45px;color:#2a2a2a">6584210331</div>
<div class="t" style="left:981px;top:473px;font-size:11.5px;letter-spacing:0.45px;color:#2a2a2a">3600.00</div>
<div class="t" style="left:1075px;top:473px;font-size:11.5px;letter-spacing:0.45px;color:#2a2a2a">4300.00</div>
<div class="t" style="left:1167px;top:473px;font-size:11.5px;letter-spacing:0.45px;color:#2a2a2a">32</div>
<div class="cbo" style="left:386px;top:494px"></div>
<div class="t" style="left:406px;top:493px;color:#2a2a2a">熊倍超</div>
<div class="t" style="left:459px;top:493px;font-size:11.5px;letter-spacing:0.45px;color:#2a2a2a">852012005</div>
<div class="t" style="left:543px;top:493px;color:#2a2a2a">结算类型</div>
<div class="t" style="left:636px;top:493px;color:#2a2a2a">自费</div>
<div class="t" style="left:689px;top:493px;color:#2a2a2a">单脏器B超检查(肾科)</div>
<div class="t" style="left:813px;top:493px;font-size:11.5px;letter-spacing:0.45px;color:#2a2a2a">50</div>
<div class="t" style="left:886px;top:493px;font-size:11.5px;letter-spacing:0.45px;color:#2a2a2a">6323200101</div>
<div class="t" style="left:981px;top:493px;font-size:11.5px;letter-spacing:0.45px;color:#2a2a2a">3600.00</div>
<div class="t" style="left:1075px;top:493px;font-size:11.5px;letter-spacing:0.45px;color:#2a2a2a">4300.00</div>
<div class="t" style="left:1167px;top:493px;font-size:11.5px;letter-spacing:0.45px;color:#2a2a2a">80</div>
<div class="cbo" style="left:386px;top:514px"></div>
<div class="t" style="left:406px;top:513px;color:#2a2a2a">熊倍超</div>
<div class="t" style="left:459px;top:513px;font-size:11.5px;letter-spacing:0.45px;color:#2a2a2a">852012005</div>
<div class="t" style="left:543px;top:513px;color:#2a2a2a">结算类型</div>
<div class="t" style="left:636px;top:513px;color:#2a2a2a">自费</div>
<div class="t" style="left:689px;top:513px;color:#2a2a2a">单脏器B超检查(肾科)</div>
<div class="t" style="left:813px;top:513px;font-size:11.5px;letter-spacing:0.45px;color:#2a2a2a">8</div>
<div class="t" style="left:886px;top:513px;font-size:11.5px;letter-spacing:0.45px;color:#2a2a2a">6584210331</div>
<div class="t" style="left:981px;top:513px;font-size:11.5px;letter-spacing:0.45px;color:#2a2a2a">3600.00</div>
<div class="t" style="left:1075px;top:513px;font-size:11.5px;letter-spacing:0.45px;color:#2a2a2a">4300.00</div>
<div class="t" style="left:1167px;top:513px;font-size:11.5px;letter-spacing:0.45px;color:#2a2a2a">32</div>
<div class="abs" style="left:1253px;top:226px;width:13px;height:334px;background:#f2f2f2"></div>
<div class="abs" style="left:1252px;top:225px;width:1px;height:335px;background:#dfe4ef"></div>
<div class="abs" style="left:1265px;top:225px;width:1px;height:335px;background:#dfe4ef"></div>
<div class="abs" style="left:1256px;top:230px;width:6px;height:90px;border-radius:3px;background:#c1c1c1"></div>
<div class="abs" style="left:381px;top:548px;width:871px;height:12px;background:#f2f2f2"></div>
<div class="abs" style="left:385px;top:551px;width:90px;height:6px;border-radius:3px;background:#c1c1c1"></div>
<div class="abs" style="left:1253px;top:548px;width:12px;height:12px;background:#fff"></div>
<div class="abs" style="left:380px;top:560px;width:886px;height:1px;background:#dfe4ef"></div>
<div class="abs" style="left:1266px;top:191px;width:100px;height:34px;background:#fff"></div>
<div class="abs" style="left:1266px;top:225px;width:100px;height:335px;background:#f2f2f2"></div>
<div class="rbtn" style="left:1274px;top:235px;width:84px;font-size:13px">扣费执行</div>
<div class="rbtn" style="left:1274px;top:263px;width:84px;font-size:13px">打印</div>
<div class="rbtn" style="left:1274px;top:291px;width:84px;font-size:13px">刷新</div>
<div class="rbtn" style="left:1274px;top:319px;width:84px;font-size:13px">过滤</div>
<div class="rbtn" style="left:1274px;top:347px;width:84px;font-size:13px">新增业务</div>
<div class="rbtn" style="left:1274px;top:375px;width:84px;font-size:13px">退费申请</div>
<div class="rbtn" style="left:1274px;top:403px;width:84px;font-size:13px">退费确认</div>
<div class="rbtn" style="left:1274px;top:431px;width:39px;font-size:13px">修改</div>
<div class="rbtn" style="left:1318px;top:431px;width:40px;font-size:13px">删除</div>
<div class="rbtn" style="left:1274px;top:459px;width:84px;font-size:13px">模板引用</div>
<div class="rbtn" style="left:1274px;top:501px;width:39px;font-size:13px">LIS</div>
<div class="rbtn" style="left:1318px;top:501px;width:40px;font-size:12px"><span style="position:relative;top:1px">PACS</span></div>
<div class="rbtn" style="left:1274px;top:529px;width:84px;font-size:13px">病历</div>
<div class="abs" style="left:132px;top:561px;width:1234px;height:8px;background:#fff"></div>
<div class="abs" style="left:132px;top:560px;width:1234px;height:1px;background:#dfe4ef"></div>
<div class="abs" style="left:132px;top:569px;width:1234px;height:1px;background:#dfe4ef"></div>
<div class="abs" style="left:1365px;top:560px;width:1px;height:10px;background:#dfe4ef"></div>
<div class="abs" style="left:1252px;top:547px;width:14px;height:1px;background:#dfe4ef"></div>
<svg class="abs" style="left:747px;top:563px" width="9" height="5" viewBox="0 0 9 5"><path d="M0 0H9L4.5 4.5z" fill="#888"/></svg>
<div class="abs" style="left:132px;top:570px;width:439px;height:174px;background:#fff"></div>
<div class="abs" style="left:562px;top:570px;width:1px;height:174px;background:#dfe4ef"></div>
<svg class="abs" style="left:141px;top:579px" width="16" height="13" viewBox="0 0 17 14"><path d="M9.5 12.6A5.3 5.3 0 0 1 3.4 6.3" fill="none" stroke="#22c322" stroke-width="2.3"/><path d="M0 7L3.6 1.2L7 7z" fill="#22c322"/><path d="M7.5 1.4A5.3 5.3 0 0 1 13.6 7.7" fill="none" stroke="#22c322" stroke-width="2.3"/><path d="M17 7L13.4 12.8L10 7z" fill="#22c322"/><path d="M3.6 3.5L3.6 6" stroke="#b8f060" stroke-width="1"/><path d="M13.4 8L13.4 10.5" stroke="#b8f060" stroke-width="1"/></svg>
<div class="t" style="left:163px;top:580px;color:#2a2a2a">刷新</div>
<svg class="abs" style="left:219px;top:578px" width="16" height="16" viewBox="0 0 16 16"><rect x="3.5" y="0.5" width="9" height="7" fill="#fff" stroke="#999"/><path d="M5 3h6M5 5h6" stroke="#bbb"/><rect x="0.5" y="7.5" width="15" height="6" rx="1.5" fill="#f4f4f4" stroke="#999"/><rect x="3.5" y="11.5" width="9" height="4" fill="#fff" stroke="#999"/><path d="M3 9.5h2M6 9.5h1" stroke="#888"/></svg>
<div class="t" style="left:239px;top:580px;color:#222;-webkit-text-stroke:0.22px #222">输液单</div>
<svg class="abs" style="left:280px;top:585px" width="8" height="5" viewBox="0 0 8 5"><path d="M0.7 0.7L4 4L7.3 0.7" fill="none" stroke="#333" stroke-width="1.1"/></svg>
<div class="abs" style="left:132px;top:605px;width:417px;height:22px;background:#f2f2f2"></div>
<div class="abs" style="left:132px;top:604px;width:430px;height:1px;background:#dfe4ef"></div>
<div class="abs" style="left:132px;top:627px;width:417px;height:1px;background:#dfe4ef"></div>
<div class="abs" style="left:132px;top:647px;width:417px;height:1px;background:#dfe4ef"></div>
<div class="abs" style="left:132px;top:667px;width:417px;height:1px;background:#dfe4ef"></div>
<div class="abs" style="left:132px;top:730px;width:430px;height:1px;background:#dfe4ef"></div>
<div class="abs" style="left:132px;top:648px;width:417px;height:19px;background:#f2f2f2"></div>
<div class="abs" style="left:205px;top:604px;width:1px;height:126px;background:#dfe4ef"></div>
<div class="abs" style="left:289px;top:604px;width:1px;height:126px;background:#dfe4ef"></div>
<div class="abs" style="left:382px;top:604px;width:1px;height:126px;background:#dfe4ef"></div>
<div class="abs" style="left:435px;top:604px;width:1px;height:126px;background:#dfe4ef"></div>
<div class="abs" style="left:549px;top:604px;width:1px;height:140px;background:#dfe4ef"></div>
<div class="t" style="left:139px;top:610px;color:#222;-webkit-text-stroke:0.22px #222">组别</div>
<div class="t" style="left:211px;top:610px;color:#222;-webkit-text-stroke:0.22px #222">药品名称</div>
<div class="t" style="left:295px;top:610px;color:#222;-webkit-text-stroke:0.22px #222">规格</div>
<div class="t" style="left:388px;top:610px;color:#222;-webkit-text-stroke:0.22px #222">次量</div>
<div class="t" style="left:441px;top:610px;color:#222;-webkit-text-stroke:0.22px #222">单位</div>
<div class="t" style="left:139px;top:632px;font-size:11.5px;letter-spacing:0.45px;color:#2a2a2a">56001</div>
<div class="t" style="left:211px;top:632px;font-size:11.5px;letter-spacing:0.45px;color:#2a2a2a">852012005</div>
<div class="t" style="left:295px;top:632px;color:#2a2a2a">结算类型</div>
<div class="t" style="left:388px;top:632px;color:#2a2a2a">自费</div>
<div class="t" style="left:441px;top:632px;color:#2a2a2a">单脏器B超</div>
<div class="t" style="left:139px;top:652px;font-size:11.5px;letter-spacing:0.45px;color:#2a2a2a">56001</div>
<div class="t" style="left:211px;top:652px;font-size:11.5px;letter-spacing:0.45px;color:#2a2a2a">852012005</div>
<div class="t" style="left:295px;top:652px;color:#2a2a2a">结算类型</div>
<div class="t" style="left:388px;top:652px;color:#2a2a2a">自费</div>
<div class="t" style="left:441px;top:652px;color:#2a2a2a">单脏器B超检</div>
<div class="abs" style="left:550px;top:605px;width:12px;height:125px;background:#f2f2f2"></div>
<div class="abs" style="left:553px;top:609px;width:6px;height:90px;border-radius:3px;background:#c1c1c1"></div>
<div class="abs" style="left:132px;top:731px;width:417px;height:13px;background:#f2f2f2"></div>
<div class="abs" style="left:550px;top:731px;width:12px;height:13px;background:#fff"></div>
<div class="abs" style="left:138px;top:734px;width:72px;height:6px;border-radius:3px;background:#c1c1c1"></div>
<svg class="abs" style="left:565px;top:656px" width="5" height="9" viewBox="0 0 5 9"><path d="M4.5 0L0 4.5L4.5 9z" fill="#888"/></svg>
<div class="abs" style="left:571px;top:570px;width:795px;height:174px;background:#fff"></div>
<div class="abs" style="left:571px;top:570px;width:1px;height:174px;background:#dfe4ef"></div>
<div class="t" style="left:584px;top:580px;color:#222;-webkit-text-stroke:0.22px #222">业务计价</div>
<div class="t" style="left:656px;top:580px;color:#222;-webkit-text-stroke:0.22px #222">业务明细</div>
<div class="t" style="left:728px;top:580px;color:#2d9cf5">处方 (输液单)</div>
<div class="abs" style="left:728px;top:601px;width:73px;height:3px;background:#2d9cf5"></div>
<div class="abs" style="left:572px;top:604px;width:794px;height:1px;background:#d9d9d9"></div>
<svg class="abs" style="left:577px;top:615px" width="14" height="14" viewBox="0 0 14 14"><rect x="0.5" y="0.5" width="13" height="13" rx="2.8" fill="#34a5fd" stroke="#1a8be9"/><path d="M3.3 7.3L6 9.9L10.8 4.4" fill="none" stroke="#fff" stroke-width="1.9" stroke-linecap="round" stroke-linejoin="round"/></svg>
<div class="lbl" style="left:600px;top:616px">日期：</div>
<div class="inp" style="left:638px;top:610px;width:110px;height:24px"></div>
<div class="t" style="left:642px;top:616px;font-size:13px;letter-spacing:0.3px;color:#222">2019–02–26</div>
<svg class="abs" style="left:728px;top:619px" width="8" height="5" viewBox="0 0 8 5"><path d="M0.7 0.7L4 4L7.3 0.7" fill="none" stroke="#333" stroke-width="1.2"/></svg>
<div class="t" style="left:752px;top:615px;font-size:14px;color:#222">至</div>
<div class="inp" style="left:769px;top:610px;width:110px;height:24px"></div>
<div class="t" style="left:773px;top:616px;font-size:13px;letter-spacing:0.3px;color:#222">2019–02–26</div>
<svg class="abs" style="left:859px;top:619px" width="8" height="5" viewBox="0 0 8 5"><path d="M0.7 0.7L4 4L7.3 0.7" fill="none" stroke="#333" stroke-width="1.2"/></svg>
<div class="lbl" style="left:891px;top:616px">处方号：</div>
<div class="inp" style="left:942px;top:610px;width:77px;height:24px;"></div>
<div class="btnb" style="left:1024px;top:610px;width:44px;height:24px;line-height:23px;font-size:12px">查询</div>
<svg class="abs" style="left:1175px;top:612px" width="16" height="16" viewBox="0 0 16 16"><rect x="3.5" y="0.5" width="9" height="7" fill="#fff" stroke="#999"/><path d="M5 3h6M5 5h6" stroke="#bbb"/><rect x="0.5" y="7.5" width="15" height="6" rx="1.5" fill="#f4f4f4" stroke="#999"/><rect x="3.5" y="11.5" width="9" height="4" fill="#fff" stroke="#999"/><path d="M3 9.5h2M6 9.5h1" stroke="#888"/></svg>
<div class="t" style="left:1195px;top:615px;color:#222;-webkit-text-stroke:0.22px #222">输液单</div>
<svg class="abs" style="left:1235px;top:619px" width="8" height="5" viewBox="0 0 8 5"><path d="M0.7 0.7L4 4L7.3 0.7" fill="none" stroke="#333" stroke-width="1.1"/></svg>
<div class="lbl" style="left:1256px;top:616px">打印次数：</div>
<div class="inp" style="left:1321px;top:610px;width:37px;height:24px;"></div>
<div class="t" style="left:1335px;top:616px;font-size:12.5px;color:#222">1</div>
<div class="abs" style="left:572px;top:638px;width:780px;height:23px;background:#f2f2f2"></div>
<div class="abs" style="left:572px;top:661px;width:780px;height:1px;background:#dfe4ef"></div>
<div class="abs" style="left:572px;top:681px;width:780px;height:1px;background:#dfe4ef"></div>
<div class="abs" style="left:572px;top:701px;width:780px;height:1px;background:#dfe4ef"></div>
<div class="abs" style="left:572px;top:730px;width:780px;height:1px;background:#dfe4ef"></div>
<div class="abs" style="left:572px;top:682px;width:780px;height:19px;background:#f2f2f2"></div>
<div class="abs" style="left:645px;top:638px;width:1px;height:92px;background:#dfe4ef"></div>
<div class="abs" style="left:729px;top:638px;width:1px;height:92px;background:#dfe4ef"></div>
<div class="abs" style="left:788px;top:638px;width:1px;height:92px;background:#dfe4ef"></div>
<div class="abs" style="left:875px;top:638px;width:1px;height:92px;background:#dfe4ef"></div>
<div class="abs" style="left:999px;top:638px;width:1px;height:92px;background:#dfe4ef"></div>
<div class="abs" style="left:1072px;top:638px;width:1px;height:92px;background:#dfe4ef"></div>
<div class="abs" style="left:1167px;top:638px;width:1px;height:92px;background:#dfe4ef"></div>
<div class="t" style="left:597px;top:643px;color:#222;-webkit-text-stroke:0.22px #222">处方号</div>
<div class="t" style="left:651px;top:643px;color:#222;-webkit-text-stroke:0.22px #222">组别</div>
<div class="t" style="left:735px;top:643px;color:#222;-webkit-text-stroke:0.22px #222">数量</div>
<div class="t" style="left:794px;top:643px;color:#222;-webkit-text-stroke:0.22px #222">药品名称</div>
<div class="t" style="left:881px;top:643px;color:#222;-webkit-text-stroke:0.22px #222">规格</div>
<div class="t" style="left:1005px;top:643px;color:#222;-webkit-text-stroke:0.22px #222">次数量</div>
<div class="t" style="left:1078px;top:643px;color:#222;-webkit-text-stroke:0.22px #222">计量单位</div>
<div class="t" style="left:1172px;top:643px;color:#222;-webkit-text-stroke:0.22px #222">用法</div>
<div class="cbo" style="left:577px;top:644px"></div>
<div class="cbo" style="left:577px;top:667px"></div>
<div class="t" style="left:597px;top:666px;font-size:11.5px;letter-spacing:0.45px;color:#2a2a2a">851212</div>
<div class="t" style="left:651px;top:666px;font-size:11.5px;letter-spacing:0.45px;color:#2a2a2a">852012005</div>
<div class="t" style="left:735px;top:666px;font-size:11.5px;letter-spacing:0.45px;color:#2a2a2a">80</div>
<div class="t" style="left:794px;top:666px;color:#2a2a2a">阿莫西林胶囊</div>
<div class="t" style="left:881px;top:666px;color:#2a2a2a">盒</div>
<div class="t" style="left:1005px;top:666px;font-size:11.5px;letter-spacing:0.45px;color:#2a2a2a">50</div>
<div class="t" style="left:1078px;top:666px;color:#2a2a2a">粒</div>
<div class="t" style="left:1172px;top:666px;font-size:11.5px;letter-spacing:0.45px;color:#2a2a2a">Tid.</div>
<div class="cbo" style="left:577px;top:687px"></div>
<div class="t" style="left:597px;top:686px;font-size:11.5px;letter-spacing:0.45px;color:#2a2a2a">851213</div>
<div class="t" style="left:651px;top:686px;font-size:11.5px;letter-spacing:0.45px;color:#2a2a2a">852012005</div>
<div class="t" style="left:735px;top:686px;font-size:11.5px;letter-spacing:0.45px;color:#2a2a2a">35</div>
<div class="t" style="left:794px;top:686px;color:#2a2a2a">阿莫西林胶囊</div>
<div class="t" style="left:881px;top:686px;color:#2a2a2a">盒</div>
<div class="t" style="left:1005px;top:686px;font-size:11.5px;letter-spacing:0.45px;color:#2a2a2a">8</div>
<div class="t" style="left:1078px;top:686px;color:#2a2a2a">粒</div>
<div class="t" style="left:1172px;top:686px;font-size:11.5px;letter-spacing:0.45px;color:#2a2a2a">Tid.</div>
<div class="abs" style="left:1353px;top:638px;width:13px;height:106px;background:#f2f2f2"></div>
<div class="abs" style="left:1352px;top:638px;width:1px;height:106px;background:#dfe4ef"></div>
<div class="abs" style="left:1356px;top:644px;width:6px;height:40px;border-radius:3px;background:#c1c1c1"></div>
<div class="abs" style="left:572px;top:731px;width:780px;height:13px;background:#f2f2f2"></div>
<div class="abs" style="left:576px;top:734px;width:79px;height:6px;border-radius:3px;background:#c1c1c1"></div>
<div class="abs" style="left:0px;top:744px;width:1366px;height:24px;background:#f2f2f2"></div>
<div class="abs" style="left:0px;top:744px;width:1366px;height:1px;background:#d4d4d4"></div>
<div class="t" style="left:14px;top:750px;color:#666">管理员</div>
<div class="t" style="left:80px;top:750px;color:#666">收费处</div>
<div class="t" style="left:147px;top:750px;color:#666">福建中医药大学附属人民医院</div>
<div class="t" style="left:334px;top:750px;color:#666">易联众医院信息综合管理平台</div>
<div class="t" style="left:521px;top:750px;color:#666">2018年12月26日</div>
<div class="t" style="left:619px;top:750px;color:#666">星期五</div>
<div class="abs" style="left:64px;top:752px;width:1px;height:10px;background:#c8c8c8"></div>
<div class="abs" style="left:131px;top:752px;width:1px;height:10px;background:#c8c8c8"></div>
<div class="abs" style="left:318px;top:752px;width:1px;height:10px;background:#c8c8c8"></div>
<div class="abs" style="left:505px;top:752px;width:1px;height:10px;background:#c8c8c8"></div>
</body></html>
